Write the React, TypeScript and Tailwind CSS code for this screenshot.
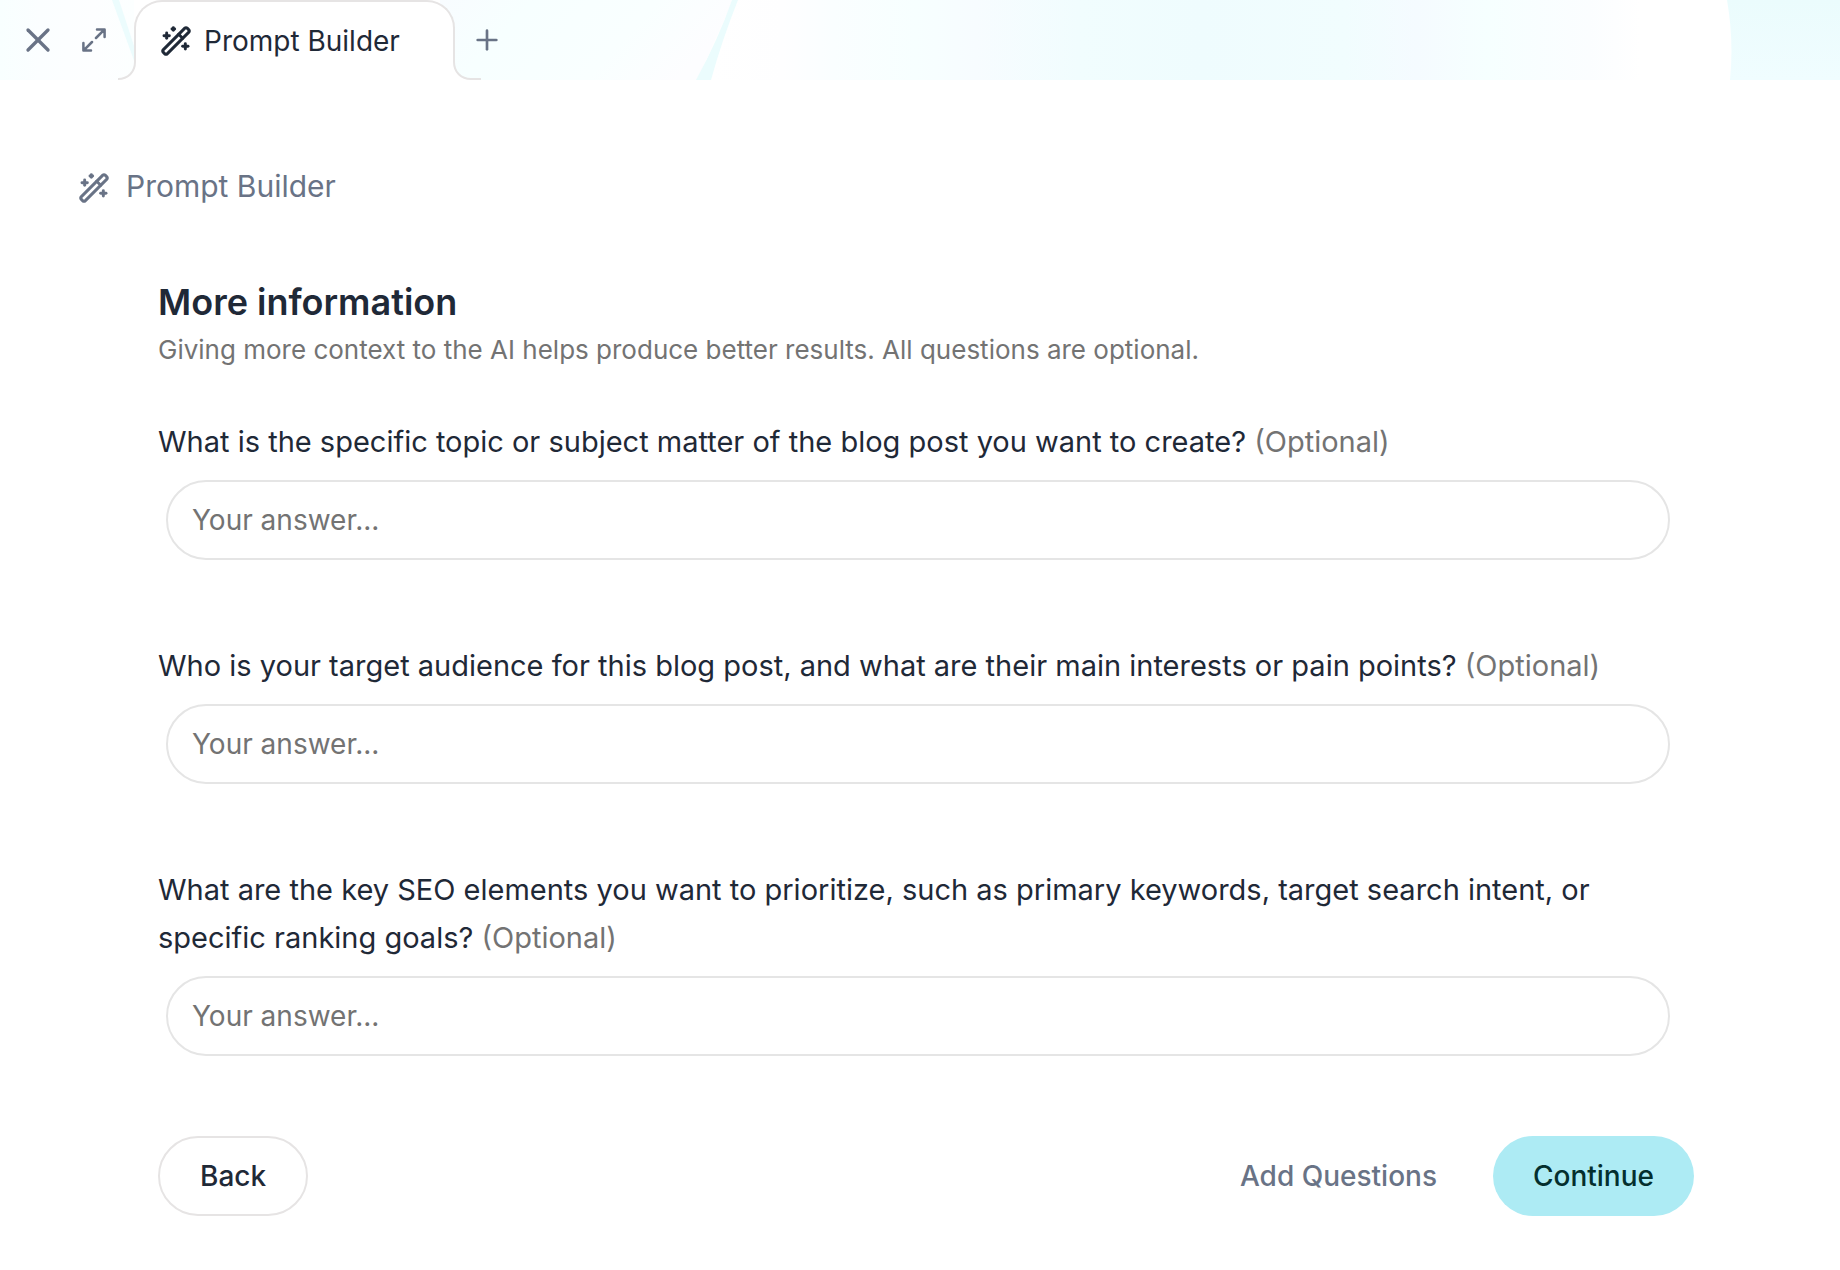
import React from "react";
import { Plus, WandSparkles, X } from "lucide-react";

const questions = [
  {
    id: "topic",
    text: "What is the specific topic or subject matter of the blog post you want to create?",
  },
  {
    id: "audience",
    text: "Who is your target audience for this blog post, and what are their main interests or pain points?",
  },
  {
    id: "seo",
    text: "What are the key SEO elements you want to prioritize, such as primary keywords, target search intent, or specific ranking goals?",
  },
];

// Pale light rays behind the tab bar
const BarBackground = () => (
  <svg
    className="absolute inset-0 h-full w-full"
    viewBox="0 0 1840 80"
    preserveAspectRatio="none"
    aria-hidden="true"
  >
    <defs>
      <linearGradient id="left" x1="0" x2="1" y1="0" y2="0">
        <stop offset="0" stopColor="#f8ffff" />
        <stop offset="0.3" stopColor="#fbfeff" />
        <stop offset="0.7" stopColor="#fdfeff" />
        <stop offset="1" stopColor="#fcffff" />
      </linearGradient>
      <linearGradient id="mid" x1="0" x2="1" y1="0" y2="0.25">
        <stop offset="0" stopColor="#f8fcff" />
        <stop offset="0.3" stopColor="#f7ffff" />
        <stop offset="0.7" stopColor="#f9ffff" />
        <stop offset="1" stopColor="#fdfdff" />
      </linearGradient>
      <linearGradient id="glow" x1="0" x2="1" y1="0" y2="0">
        <stop offset="0" stopColor="#ffffff" />
        <stop offset="0.07" stopColor="#fefeff" />
        <stop offset="0.12" stopColor="#fafeff" />
        <stop offset="0.2" stopColor="#f7ffff" />
        <stop offset="0.26" stopColor="#f7fcff" />
        <stop offset="0.36" stopColor="#f1fdfe" />
        <stop offset="0.48" stopColor="#effcfe" />
        <stop offset="0.62" stopColor="#f1fdfe" />
        <stop offset="0.69" stopColor="#f5fbff" />
        <stop offset="0.76" stopColor="#f6ffff" />
        <stop offset="0.86" stopColor="#fbfdff" />
        <stop offset="0.91" stopColor="#ffffff" />
        <stop offset="1" stopColor="#ffffff" />
      </linearGradient>
      <linearGradient id="right" x1="0" x2="0" y1="0" y2="1">
        <stop offset="0" stopColor="#ebfcfd" />
        <stop offset="1" stopColor="#f0fdff" />
      </linearGradient>
    </defs>
    <path d="M0 0H134V80H0Z" fill="url(#left)" />
    <path d="M112 0H119L136 52V66Z" fill="#ecfcfd" />
    <path d="M440 0H733L697 80H440Z" fill="url(#mid)" />
    <path d="M738 0H1728Q1736 40 1730 80H711Z" fill="url(#glow)" />
    <path d="M732 0H738Q722 40 711 80H696Q718 40 732 0Z" fill="#ebfcfd" />
    <path d="M1727 0H1840V80H1730Q1734 40 1727 0Z" fill="url(#right)" />
  </svg>
);

const ExpandIcon = () => (
  <svg
    className="size-6"
    viewBox="0 0 24 24"
    fill="none"
    stroke="currentColor"
    strokeWidth="2.5"
    strokeLinecap="round"
    strokeLinejoin="round"
    aria-hidden="true"
  >
    <path d="M15 1.4H22.6V9M22.3 1.7L14 10M9 22.6H1.4V15M1.7 22.3L10 14" />
  </svg>
);

const Tab = () => (
  <div className="relative ml-7 w-[321px] rounded-t-[28px] border-2 border-b-0 border-[#e6e4e4] bg-white">
    <button
      type="button"
      className="flex h-full w-full items-center gap-3 pl-6 text-[28px] text-[#1f2937]"
    >
      <WandSparkles className="size-8" strokeWidth={2.2} aria-hidden="true" />
      Prompt Builder
    </button>
    {/* Curved feet that join the tab to the page */}
    <svg
      className="absolute bottom-0 -left-[18px] h-[18px] w-[18px]"
      viewBox="0 0 18 18"
      fill="none"
      aria-hidden="true"
    >
      <path d="M18 0V18H0V17C10 17 17 10 17 0Z" fill="#fff" />
      <path d="M0 17C10 17 17 10 17 0" stroke="#e6e4e4" strokeWidth="2" />
    </svg>
    <svg
      className="absolute bottom-0 -right-[28px] h-[18px] w-[28px]"
      viewBox="0 0 28 18"
      fill="none"
      aria-hidden="true"
    >
      <path d="M0 0V18H28V17H18C8 17 1 10 1 0Z" fill="#fff" />
      <path d="M28 17H18C8 17 1 10 1 0" stroke="#e6e4e4" strokeWidth="2" />
    </svg>
  </div>
);

const App = () => {
  return (
    <div className="min-h-screen bg-white font-['Inter',sans-serif] text-[#1f2937]">
      <header className="relative h-20 overflow-hidden">
        <BarBackground />
        <div className="relative flex h-full text-[#697386]">
          <button type="button" aria-label="Close" className="pl-[18px]">
            <X className="size-10" strokeWidth={2} />
          </button>
          <button type="button" aria-label="Expand" className="pl-6">
            <ExpandIcon />
          </button>
          <Tab />
          <button type="button" aria-label="New tab" className="pl-4">
            <Plus className="size-8" strokeWidth={2} />
          </button>
        </div>
      </header>

      <main className="pt-20 pb-12">
        <div className="flex h-[52px] items-center gap-4 pl-[78px] text-[30px] text-[#697386]">
          <WandSparkles
            className="mt-1 size-8"
            strokeWidth={2.2}
            aria-hidden="true"
          />
          <span>Prompt Builder</span>
        </div>

        <form className="pt-15 pr-[146px] pl-[158px]">
          <h1 className="text-[36px] leading-[60px] font-semibold">
            More information
          </h1>
          <p className="text-[26px] leading-9 text-[#737373]">
            Giving more context to the AI helps produce better results. All
            questions are optional.
          </p>

          <div className="flex flex-col gap-[82px] pt-[50px]">
            {questions.map((question) => (
              <div key={question.id}>
                <label
                  htmlFor={question.id}
                  className="block text-[29px] leading-12"
                >
                  {question.text}{" "}
                  <span className="text-[#737373]">(Optional)</span>
                </label>
                <div className="pt-3.5 pr-6 pl-2">
                  <input
                    id={question.id}
                    type="text"
                    placeholder="Your answer..."
                    className="h-20 w-full rounded-full border-2 border-[#e5e5e5] bg-white px-6 text-[28px] placeholder:text-[#737373]"
                  />
                </div>
              </div>
            ))}
          </div>

          <div className="flex items-center pt-20 text-[28px] font-medium">
            <button
              type="button"
              className="h-20 rounded-full border-2 border-[#e6e4e4] px-10"
            >
              Back
            </button>
            <button
              type="button"
              className="ml-auto h-20 px-14 text-[#697386]"
            >
              Add Questions
            </button>
            <button
              type="submit"
              className="h-20 rounded-full bg-[#adebf4] px-10 text-[#042f2e]"
            >
              Continue
            </button>
          </div>
        </form>
      </main>
    </div>
  );
};

export default App;
